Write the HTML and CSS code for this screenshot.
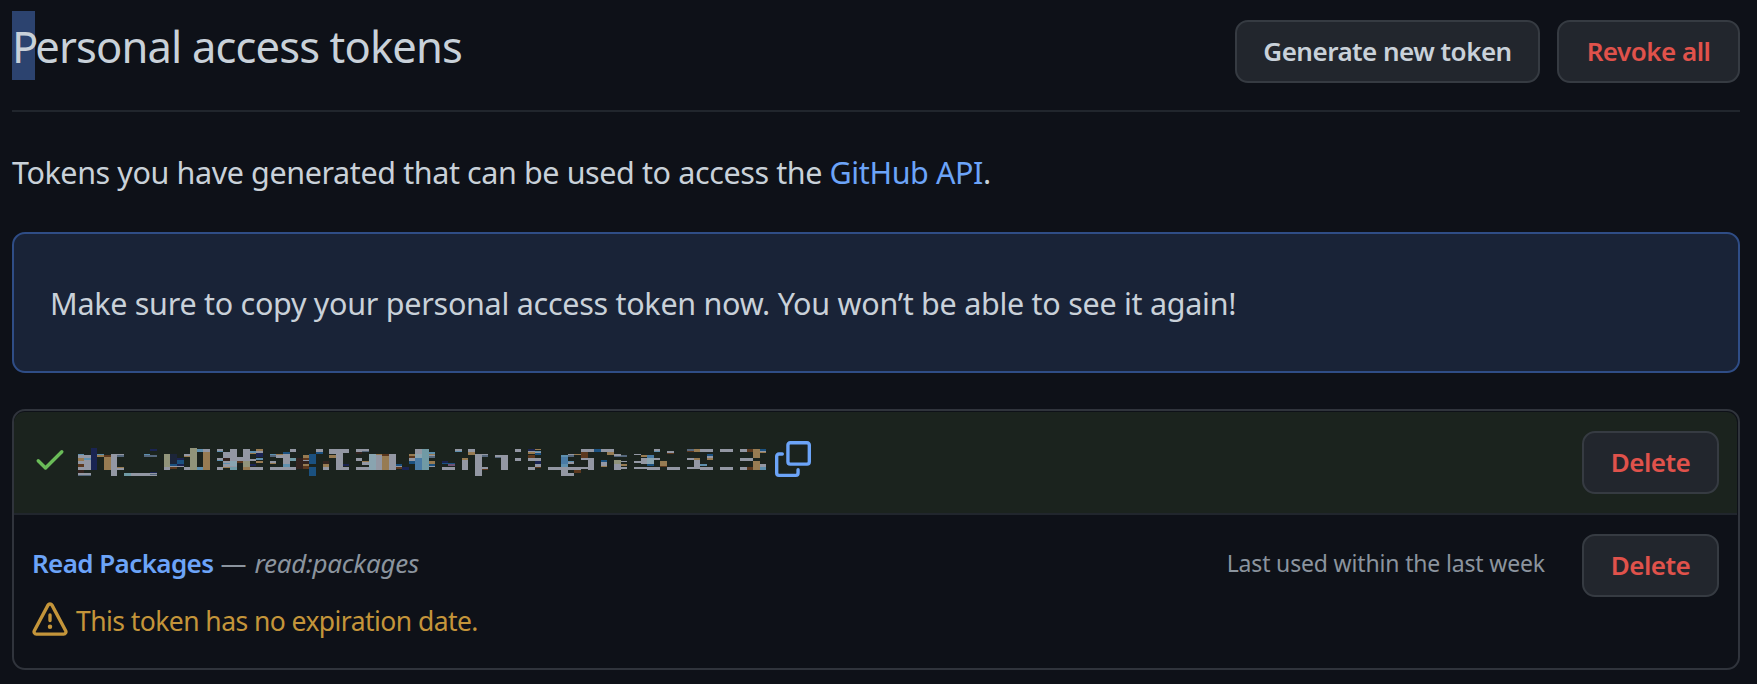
FILE: index.html
```
<!DOCTYPE html>
<html lang="en">
<head>
<meta charset="utf-8">
<title>Personal access tokens</title>
<link rel="stylesheet" href="styles.css">
</head>
<body>
<header class="subhead">
  <h1 class="subhead-title"><span class="selected">P</span>ersonal access tokens</h1>
  <div class="subhead-actions">
    <button class="btn btn-generate">Generate new token</button>
    <button class="btn btn-danger btn-revoke">Revoke all</button>
  </div>
</header>
<p class="intro">Tokens you have generated that can be used to access the <a class="link">GitHub API</a>.</p>
<div class="flash">Make sure to copy your personal access token now. You won’t be able to see it again!</div>
<section class="box">
  <div class="row row-new">
    <svg class="icon icon-check" viewBox="0 0 16 16"><path d="M13.78 4.22a.75.75 0 010 1.06l-7.25 7.25a.75.75 0 01-1.06 0L2.22 9.28a.75.75 0 011.06-1.06L6 10.94l6.72-6.72a.75.75 0 011.06 0z"/></svg>
    <svg class="token" id="token" viewBox="0 0 690 32" shape-rendering="crispEdges"></svg>
    <svg class="icon icon-copy" viewBox="0 0 16 16"><path d="M0 6.75C0 5.784.784 5 1.75 5h1.5a.75.75 0 010 1.5h-1.5a.25.25 0 00-.25.25v7.5c0 .138.112.25.25.25h7.5a.25.25 0 00.25-.25v-1.5a.75.75 0 011.5 0v1.5A1.75 1.75 0 019.25 16h-7.5A1.75 1.75 0 010 14.25v-7.5z"/><path fill-rule="evenodd" d="M5 1.75C5 .784 5.784 0 6.75 0h7.5C15.216 0 16 .784 16 1.75v7.5A1.75 1.75 0 0114.25 11h-7.5A1.75 1.75 0 015 9.25v-7.5zm1.75-.25a.25.25 0 00-.25.25v7.5c0 .138.112.25.25.25h7.5a.25.25 0 00.25-.25v-7.5a.25.25 0 00-.25-.25h-7.5z"/></svg>
    <button class="btn btn-danger btn-delete">Delete</button>
  </div>
  <div class="row row-token">
    <div class="details">
      <div class="name-line"><a class="name">Read Packages</a><span class="dash">—</span><em class="scope">read:packages</em></div>
      <div class="warning"><svg class="icon icon-alert" viewBox="0 0 16 16"><path fill-rule="evenodd" d="M8.22 1.754a.25.25 0 00-.44 0L1.698 13.132a.25.25 0 00.22.368h12.164a.25.25 0 00.22-.368L8.22 1.754zm-1.763-.707c.659-1.234 2.427-1.234 3.086 0l6.082 11.378A1.75 1.75 0 0114.082 15H1.918a1.75 1.75 0 01-1.543-2.575L6.457 1.047zM9 11a1 1 0 11-2 0 1 1 0 012 0zm-.25-5.25a.75.75 0 00-1.5 0v2.5a.75.75 0 001.5 0v-2.5z"/></svg><span>This token has no expiration date.</span></div>
    </div>
    <span class="last-used">Last used within the last week</span>
    <button class="btn btn-danger btn-delete">Delete</button>
  </div>
</section>
<script src="token.js"></script>
</body>
</html>
```
FILE: styles.css
```
* { box-sizing: border-box; }
body {
  margin: 0;
  padding: 0 17px 0 12px;
  height: 684px;
  overflow: hidden;
  background: #0e1118;
  color: #c9d1d9;
  font-family: "Noto Sans", "Open Sans", sans-serif;
}
.subhead {
  display: flex;
  justify-content: space-between;
  align-items: flex-start;
  height: 112px;
  border-bottom: 2px solid #21262d;
}
.subhead-title {
  margin: 12px 0 0;
  font-size: 43.5px;
  font-weight: 400;
  line-height: 68px;
  letter-spacing: -0.86px;
}
.selected {
  padding: 5px 0 4px;
  background: #2c436f;
  letter-spacing: -3px;
}
.subhead-actions { display: flex; gap: 17px; margin-top: 20px; }
.btn {
  flex: none;
  height: 63px;
  margin: 0;
  padding: 0 0 1px;
  border: 2px solid #363b42;
  border-radius: 13px;
  background: #22262d;
  color: #c9d1d9;
  font-family: inherit;
  font-size: 26px;
  font-weight: 600;
  letter-spacing: -0.52px;
  white-space: nowrap;
}
.btn-danger { color: #e0524b; }
.btn-generate { width: 305px; }
.btn-revoke { width: 183px; }
.btn-delete { width: 137px; }
.intro {
  margin: 36px 0;
  font-size: 30.5px;
  line-height: 48px;
  letter-spacing: -0.4px;
  white-space: nowrap;
}
.link { color: #6ca4f8; }
.flash {
  height: 141px;
  padding: 46px 36px;
  border: 2px solid #2f4d86;
  border-radius: 13px;
  background: #192337;
  font-size: 30.5px;
  line-height: 46px;
  letter-spacing: -0.28px;
  white-space: nowrap;
}
.box {
  height: 261px;
  margin-top: 36px;
  padding: 1px 1px 0 0;
  border: 2px solid #30343c;
  border-radius: 13px;
}
.row { display: flex; align-items: flex-start; padding-right: 18px; }
.row-new {
  height: 103px;
  padding-top: 19px;
  padding-left: 18px;
  border-bottom: 2px solid #21262d;
  border-radius: 10px 10px 0 0;
  background: #1b231e;
}
.icon { flex: none; width: 36px; height: 36px; fill: currentColor; }
.icon-check { margin-top: 10px; color: #6abc58; }
.token { flex: none; width: 690px; height: 32px; margin: 16px 0 0 10px; }
.icon-copy { margin: 10px auto 0 7px; color: #6ca4f8; }
.row-token { padding-top: 19px; padding-left: 18px; }
.details { flex: 1; }
.name-line {
  display: flex;
  height: 40px;
  margin-top: 9px;
  font-size: 26px;
  line-height: 40px;
}
.name { color: #6ca4f8; font-weight: 600; letter-spacing: -0.6px; }
.dash { margin: 0 8px 0 7px; color: #8b949e; }
.scope { color: #8b949e; letter-spacing: -0.25px; }
.warning {
  display: flex;
  gap: 8px;
  height: 40px;
  margin-top: 19px;
  color: #c4953a;
  font-size: 26.5px;
  line-height: 38px;
  letter-spacing: -0.56px;
}
.last-used {
  margin: 9px 37px 0 0;
  color: #8b949e;
  font-size: 23px;
  line-height: 40px;
  letter-spacing: -0.16px;
}
```
FILE: token.js
```
// Pixelated token value: blocks are x,y,w,h in thirds of a pixel, grouped by colour.
var palette = {
  g: "#9397a3", t: "#977b52", l: "#5e8fae", n: "#1a2452", r: "#5c381e", k: "#33231f",
  e: "#709aa5", o: "#91947a", b: "#1b5180", s: "#55677c", d: "#1c2539", p: "#89a4b0",
  m: "#4a7ba5", v: "#6d5274"
};
var segments = [
  { x: -234, y: -141, blocks: {
    l: "234,162,18,4 251,174,22,6 291,162,21,4 432,162,18,4 591,147,18,9 591,201,18,9",
    g: "234,166,39,8 251,180,22,4 234,184,39,8 251,192,22,9 234,201,39,9 234,219,39,5 333,162,18,66 351,162,21,3 351,204,21,6 393,219,78,9 492,201,18,9 510,198,42,3 552,162,18,5 552,201,18,9 609,147,21,9",
    t: "234,174,17,10 291,166,21,4 312,171,21,39 351,201,21,3 552,167,18,4 609,156,21,54",
    r: "234,192,17,8 312,165,21,6 510,201,21,6", k: "234,210,17,9",
    s: "234,224,39,4 351,165,21,6 432,165,39,6 450,222,21,3",
    n: "273,144,18,66 450,147,21,6 450,216,21,4 531,174,21,6 531,192,21,6",
    e: "372,219,21,9", o: "492,162,18,39 570,144,21,66", d: "510,162,21,30", b: "510,192,21,6 531,180,21,12" } },
  { x: 366, y: -21, blocks: {
    g: "51,27,18,6 51,54,18,6 51,81,18,9 69,36,21,18 69,63,21,6 69,72,21,9 90,27,21,36 90,78,21,3 111,51,18,12 129,27,21,36 150,57,18,5 150,81,39,9 168,33,21,5 210,63,18,5 210,81,39,9 228,45,21,8 249,42,21,30 249,81,21,9 270,27,18,9 270,81,18,9 309,60,18,3 348,27,21,9 369,81,18,9 387,27,21,15 408,27,21,63 429,27,18,12 429,81,18,9",
    l: "51,33,18,3 51,60,18,3 69,69,21,3 150,33,18,6 168,54,21,6 210,42,18,3 249,72,21,8",
    k: "69,54,21,9 288,54,21,33 309,63,18,9 369,63,18,9", p: "90,63,21,15", e: "90,81,21,9 270,54,18,9",
    r: "111,63,18,6 309,54,18,6 309,78,18,9", o: "129,63,21,18",
    t: "69,81,21,3 129,81,21,9 150,39,18,4 168,27,21,6 168,63,21,5 210,68,18,4 228,42,21,3 309,45,18,9 309,72,18,6 369,72,18,9 387,45,21,8",
    n: "150,72,18,6 168,38,21,14 429,72,18,5", s: "210,45,18,6",
    b: "249,36,21,6 327,42,21,30 327,81,21,27 348,36,21,6" } },
  { x: 846, y: -21, blocks: {
    g: "-12,27,18,9 -12,54,18,9 -12,81,18,9 6,27,21,5 6,67,21,8 6,81,21,9 48,45,18,45 108,78,18,3 147,54,18,9 165,27,21,15 207,45,18,4 207,78,18,4 246,81,39,9 285,27,21,6 306,60,18,30 324,27,21,9 345,42,21,66 366,42,18,3 366,81,18,6 405,45,18,6 423,45,21,45 465,27,18,9 465,54,18,9",
    s: "6,32,21,4 207,49,18,4 366,45,18,6 405,51,18,3", k: "-12,36,18,5",
    t: "6,63,21,4 48,42,18,3 66,48,21,42 147,42,18,7 207,42,18,3 207,63,18,9 306,54,18,6 324,36,21,9",
    p: "27,42,21,48 165,42,21,12", r: "66,42,21,6 108,81,18,6 147,49,18,4 366,87,18,3", o: "87,66,21,24 ", 
    g2: "", b: "108,72,18,6 147,63,18,9 207,72,18,6 246,69,39,4", n: "126,81,21,9 246,63,18,6",
    m: "165,54,21,36", e: "186,27,21,63", l: "207,36,18,6 285,33,21,3", v: "264,73,21,6" } },
  { x: 846, y: -21, blocks: { g: "87,42,21,48" } },
  { x: 1356, y: -21, blocks: {
    g: "-6,33,21,3 15,36,18,3 -6,54,39,9 -6,81,21,9 15,72,18,9 54,81,39,9 93,81,21,27 114,42,18,3 114,66,18,6 114,81,39,9 114,99,18,9 153,27,39,9 153,54,21,6 153,81,21,6 174,54,18,36 213,27,39,9 213,66,18,12 252,42,21,6 252,72,21,18 273,63,18,4 273,81,18,6 312,42,21,4 312,63,39,6 312,81,39,6 333,54,18,18 351,81,21,9 372,27,18,9 372,54,18,6 372,81,18,9 411,33,21,6 411,81,39,9 471,54,21,6 471,81,21,6 492,60,18,27 510,27,39,9 510,81,39,9 531,48,18,6 570,27,39,9 570,81,39,9 630,27,21,9 630,54,39,9 630,81,21,9 690,33,18,3 690,72,18,9",
    n: "-6,27,21,5 15,63,18,9", t: "-6,36,21,7 15,27,18,4 132,42,21,3 213,78,18,3 231,36,21,9 273,72,18,6 333,45,18,7 390,63,21,14 492,27,18,9 492,54,18,6 531,54,18,6 669,27,21,27 669,63,21,27 690,36,18,3",
    r: "-6,45,21,9 15,81,18,3 132,90,21,9 153,36,21,18 390,77,21,4 411,39,21,3 471,33,21,3 651,27,18,9 651,81,18,9",
    l: "15,33,18,3 93,45,21,6 93,72,21,9 114,63,18,3 372,33,18,3 510,72,21,7 690,81,18,9", p: "351,54,21,18",
    m: "93,51,21,21 351,45,21,9", s: "114,45,18,6 252,48,21,3 273,45,18,6 471,27,21,6",
    b: "15,39,18,6 192,27,21,9 213,60,18,6 351,72,21,6 531,42,18,6 690,27,18,6", o: "252,60,21,12" } }
];
var svg = document.getElementById("token");
segments.forEach(function (segment) {
  Object.keys(segment.blocks).forEach(function (key) {
    segment.blocks[key].trim().split(" ").filter(Boolean).forEach(function (block) {
      var v = block.split(",").map(Number);
      var rect = document.createElementNS("http://www.w3.org/2000/svg", "rect");
      rect.setAttribute("x", (v[0] + segment.x) / 3);
      rect.setAttribute("y", (v[1] + segment.y) / 3);
      rect.setAttribute("width", v[2] / 3);
      rect.setAttribute("height", v[3] / 3);
      rect.setAttribute("fill", palette[key]);
      svg.appendChild(rect);
    });
  });
});
```
